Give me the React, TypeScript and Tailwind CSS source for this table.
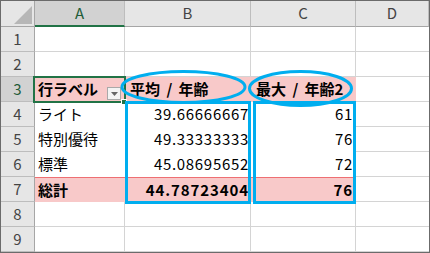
const font = { fontFamily: '"Noto Sans CJK JP", "Noto Sans", sans-serif' };

const cols = ["A", "B", "C", "D"];
const widths = ["w-[90px]", "w-[126px]", "w-[105px]", "w-[73px]"];

type Row = { label?: string; b?: string; c?: string; kind?: "head" | "body" | "total" };

const rows: Row[] = [
  {},
  {},
  { label: "行ラベル", b: "平均 / 年齢", c: "最大 / 年齢2", kind: "head" },
  { label: "ライト", b: "39.66666667", c: "61", kind: "body" },
  { label: "特別優待", b: "49.33333333", c: "76", kind: "body" },
  { label: "標準", b: "45.08695652", c: "72", kind: "body" },
  { label: "総計", b: "44.78723404", c: "76", kind: "total" },
  {},
  {},
];

function Corner() {
  return (
    <div className="w-[34px] h-[26px] bg-[#e6e6e6] border-r border-b border-[#a6a6a6] relative">
      <svg width="34" height="26" className="absolute left-0 top-0">
        <polygon points="31,5 31,23 13,23" fill="#b7b7b7" />
      </svg>
    </div>
  );
}

function ColHead({ name, i }: { name: string; i: number }) {
  const active = name === "A";
  return (
    <div
      className={`${widths[i]} h-[26px] flex items-center justify-center text-[15px] border-r border-[#bdbdbd] ${
        active ? "bg-[#d2d2d2] text-[#1e5c38] border-b-2 border-b-[#217346]" : "bg-[#e6e6e6] text-[#444] border-b border-b-[#a6a6a6]"
      }`}
    >
      {name}
    </div>
  );
}

function DropButton() {
  return (
    <div className="w-[14px] h-[13px] mr-[4px] mt-[10px] border border-[#a9a9a9] bg-[#f3f3f3] flex items-center justify-center">
      <svg width="7" height="4">
        <polygon points="0,0 7,0 3.5,4" fill="#666" />
      </svg>
    </div>
  );
}

function SheetRow({ row, n }: { row: Row; n: number }) {
  const inPivot = !!row.kind;
  const pink = row.kind === "head" || row.kind === "total";
  const bold = pink ? "font-bold" : "";
  const grid = inPivot ? "" : "border-r border-b border-[#d4d4d4]";
  const fill = pink ? "bg-[#f8c9c9]" : "bg-white";
  const redTop = row.kind === "total" ? "border-t border-t-[#ee6f72]" : "";
  const head = row.kind === "head";
  // numbers are a touch wider than the CJK font's digits
  const nums = head ? "justify-start pl-[5px] [word-spacing:3px]" : row.kind === "total" ? "justify-end tracking-[0.9px]" : "justify-end tracking-[0.7px]";
  return (
    <div className="flex h-[25px]">
      <div
        className={`w-[34px] h-[25px] flex items-center justify-center text-[15px] border-r border-b border-r-[#a6a6a6] border-b-[#bdbdbd] ${
          n === 3 ? "bg-[#d2d2d2] text-[#1e5c38]" : "bg-[#e6e6e6] text-[#444]"
        }`}
      >
        {n}
      </div>
      <div className={`w-[90px] h-[25px] flex ${grid} ${fill} ${redTop} ${bold}`}>
        <span className="flex-1 pl-[3px] flex items-center text-[15px] text-black">{row.label}</span>
        {head && <DropButton />}
      </div>
      <div className={`w-[126px] h-[25px] flex items-center text-[15px] text-black pr-[2px] ${grid} ${fill} ${redTop} ${bold} ${nums}`}>
        {row.b}
      </div>
      <div className={`w-[105px] h-[25px] flex items-center text-[15px] text-black pr-[3px] ${grid} ${fill} ${redTop} ${bold} ${nums}`}>
        {row.c}
      </div>
      <div className="w-[73px] h-[25px] border-b border-[#d4d4d4] bg-white" />
    </div>
  );
}

export default function App() {
  return (
    <div className="w-[430px] h-[253px] bg-white border border-[#6b6b6b] relative overflow-hidden" style={font}>
      <div className="flex">
        <Corner />
        {cols.map((c, i) => (
          <ColHead key={c} name={c} i={i} />
        ))}
      </div>
      {rows.map((r, i) => (
        <SheetRow key={i} row={r} n={i + 1} />
      ))}

      {/* active cell A3 with fill handle */}
      <div className="absolute left-[32px] top-[75px] w-[93px] h-[27px] border-2 border-[#217346] pointer-events-none" />
      <div className="absolute left-[120px] top-[98px] w-[6px] h-[6px] bg-[#217346] border border-white" />

      {/* highlight marks */}
      <div className="absolute left-[124px] top-[100px] w-[126px] h-[103px] border-[3px] border-[#00aeef]" />
      <div className="absolute left-[252px] top-[100px] w-[103px] h-[103px] border-[3px] border-[#00aeef]" />
      <svg className="absolute left-0 top-0 pointer-events-none" width="430" height="253">
        <ellipse cx="182.5" cy="86" rx="61.5" ry="15.5" fill="none" stroke="#00aeef" strokeWidth="3" />
        <ellipse cx="299.5" cy="87.5" rx="51" ry="17" fill="none" stroke="#00aeef" strokeWidth="3" />
      </svg>
    </div>
  );
}
